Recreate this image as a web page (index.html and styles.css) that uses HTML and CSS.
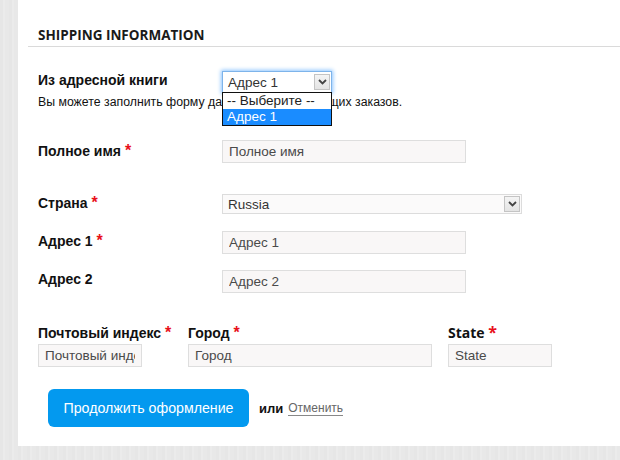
FILE: index.html
```html
<!DOCTYPE html>
<html lang="ru">
<head>
<meta charset="utf-8">
<title>Shipping information</title>
<link rel="stylesheet" href="styles.css">
</head>
<body>
<div class="panel">
  <h2 class="head">Shipping Information</h2>
  <div class="form">
    <div class="row row-book">
      <label class="lbl">Из адресной книги</label>
      <div class="field">
        <div class="sel sel-focus sel-book">
          <span class="sel-text">Адрес 1</span>
          <span class="sel-btn"><svg width="9" height="6" viewBox="0 0 9 6"><path d="M1 1l3.5 3.5L8 1" fill="none" stroke="#444" stroke-width="1.8"/></svg></span>
        </div>
        <ul class="drop">
          <li>-- Выберите --</li>
          <li class="hl">Адрес 1</li>
        </ul>
      </div>
    </div>
    <p class="help">Вы можете заполнить форму данными из предыдущих заказов.</p>

    <div class="row row-name">
      <label class="lbl lbl-m3">Полное имя <span class="req">*</span></label>
      <input class="inp inp-w" type="text" placeholder="Полное имя">
    </div>

    <div class="row row-country">
      <label class="lbl lbl-m1">Страна <span class="req">*</span></label>
      <div class="sel sel-country">
        <span class="sel-text">Russia</span>
        <span class="sel-btn"><svg width="9" height="6" viewBox="0 0 9 6"><path d="M1 1l3.5 3.5L8 1" fill="none" stroke="#444" stroke-width="1.8"/></svg></span>
      </div>
    </div>

    <div class="row row-a1">
      <label class="lbl lbl-m2">Адрес 1 <span class="req">*</span></label>
      <input class="inp inp-w" type="text" placeholder="Адрес 1">
    </div>

    <div class="row row-a2">
      <label class="lbl lbl-m1">Адрес 2</label>
      <input class="inp inp-w" type="text" placeholder="Адрес 2">
    </div>

    <div class="cols">
      <div class="col col-zip">
        <label class="lbl">Почтовый индекс <span class="req">*</span></label>
        <input class="inp inp-zip" type="text" placeholder="Почтовый индекс">
      </div>
      <div class="col col-city">
        <label class="lbl">Город <span class="req">*</span></label>
        <input class="inp inp-city" type="text" placeholder="Город">
      </div>
      <div class="col col-state">
        <label class="lbl lbl-os">State <span class="req">*</span></label>
        <input class="inp inp-zip" type="text" placeholder="State">
      </div>
    </div>

    <div class="actions">
      <button class="btn" type="button">Продолжить оформление</button>
      <span class="or">или</span>
      <a class="cancel" href="#">Отменить</a>
    </div>
  </div>
</div>
</body>
</html>
```

FILE: styles.css
```css
html, body {
  margin: 0;
  padding: 0;
}
body {
  width: 620px;
  height: 460px;
  overflow: hidden;
  background: repeating-linear-gradient(90deg, #e6e6e6 0 3px, #ebebeb 3px 5px, #e8e8e8 5px 9px);
  font-family: "Liberation Sans", Arial, sans-serif;
  color: #111;
}
.panel {
  margin-left: 18px;
  height: 446px;
  box-sizing: border-box;
  background: #fff;
  padding-top: 27px;
}
.head {
  margin: 0 0 0 10px;
  padding: 0 0 3px 10px;
  border-bottom: 1px solid #dadada;
  font: bold 13.5px/16px "Open Sans", sans-serif;
  text-transform: uppercase;
  color: #1a1a1a;
}
.form {
  padding-left: 20px;
}
.row {
  display: flex;
  align-items: flex-start;
}
.lbl {
  display: block;
  width: 184px;
  flex: none;
  height: 16px;
  font: bold 14px/16px "Liberation Sans", Arial, sans-serif;
  color: #111;
}
.lbl-m1 { margin-top: 1px; }
.lbl-m2 { margin-top: 2px; }
.lbl-m3 { margin-top: 3px; }
.lbl-os {
  font-family: "Open Sans", sans-serif;
  font-size: 14px;
}
.req {
  color: #e8101a;
  font-size: 16px;
  line-height: 0;
}
.row-book { margin-top: 24px; }
.row-book .lbl { margin-top: 1px; }
.field {
  position: relative;
}
.sel {
  box-sizing: border-box;
  display: flex;
  align-items: center;
  justify-content: space-between;
  background: #fbfafa;
  border: 1px solid #dcdcdc;
  font-size: 13.5px;
  color: #333;
}
.sel-text {
  padding-left: 5px;
}
.sel-btn {
  box-sizing: border-box;
  display: flex;
  align-items: center;
  justify-content: center;
  width: 16px;
  height: 16px;
  margin-right: 1px;
  border: 1px solid #c4c4c4;
  background: linear-gradient(#f4f4f4, #e4e4e4);
}
.sel-book {
  width: 110px;
  height: 22px;
  background: #fff;
}
.sel-focus {
  border-color: #7eb4ea;
  box-shadow: 0 0 4px 1px #8cc4ff;
}
.sel-country {
  width: 300px;
  height: 20px;
}
.drop {
  position: absolute;
  left: 0;
  top: 21px;
  width: 110px;
  box-sizing: border-box;
  margin: 0;
  padding: 0;
  list-style: none;
  background: #fff;
  border: 1px solid #111;
  font-size: 13.5px;
  line-height: 16px;
  color: #222;
  z-index: 2;
}
.drop li {
  padding-left: 4px;
}
.drop .hl {
  background: #1a8cff;
  color: #fff;
}
.help {
  margin: 2px 0 0;
  font-size: 12.3px;
  line-height: 15px;
  color: #111;
}
.inp {
  box-sizing: border-box;
  height: 23px;
  margin: 0;
  padding: 0 6px;
  border: 1px solid #dedede;
  background: #f9f7f7;
  font: 13.5px "Liberation Sans", Arial, sans-serif;
  color: #444;
  outline: none;
}
.inp::placeholder {
  color: #4a4a4a;
  opacity: 1;
}
.inp-w { width: 244px; }
.inp-zip { width: 104px; }
.inp-city { width: 244px; }
.row-name { margin-top: 30px; }
.row-country { margin-top: 31px; }
.row-a1 { margin-top: 17px; }
.row-a2 { margin-top: 16px; }
.cols {
  display: flex;
  margin-top: 32px;
}
.col { flex: none; }
.col-zip { width: 150px; }
.col-city { width: 260px; }
.cols .lbl {
  width: auto;
  margin-bottom: 3px;
  white-space: nowrap;
}
.actions {
  display: flex;
  align-items: center;
  margin-top: 22px;
  margin-left: 10px;
}
.btn {
  width: 201px;
  height: 38px;
  border: 0;
  border-radius: 6px;
  background: #0399ef;
  color: #fff;
  font: 14.2px "Liberation Sans", Arial, sans-serif;
  padding: 0;
}
.or {
  margin-left: 10px;
  font: bold 13px "Liberation Sans", Arial, sans-serif;
  color: #111;
}
.cancel {
  margin-left: 5px;
  font-size: 12px;
  color: #666;
  text-decoration: none;
  border-bottom: 1px solid #888;
  line-height: 14px;
}
```
